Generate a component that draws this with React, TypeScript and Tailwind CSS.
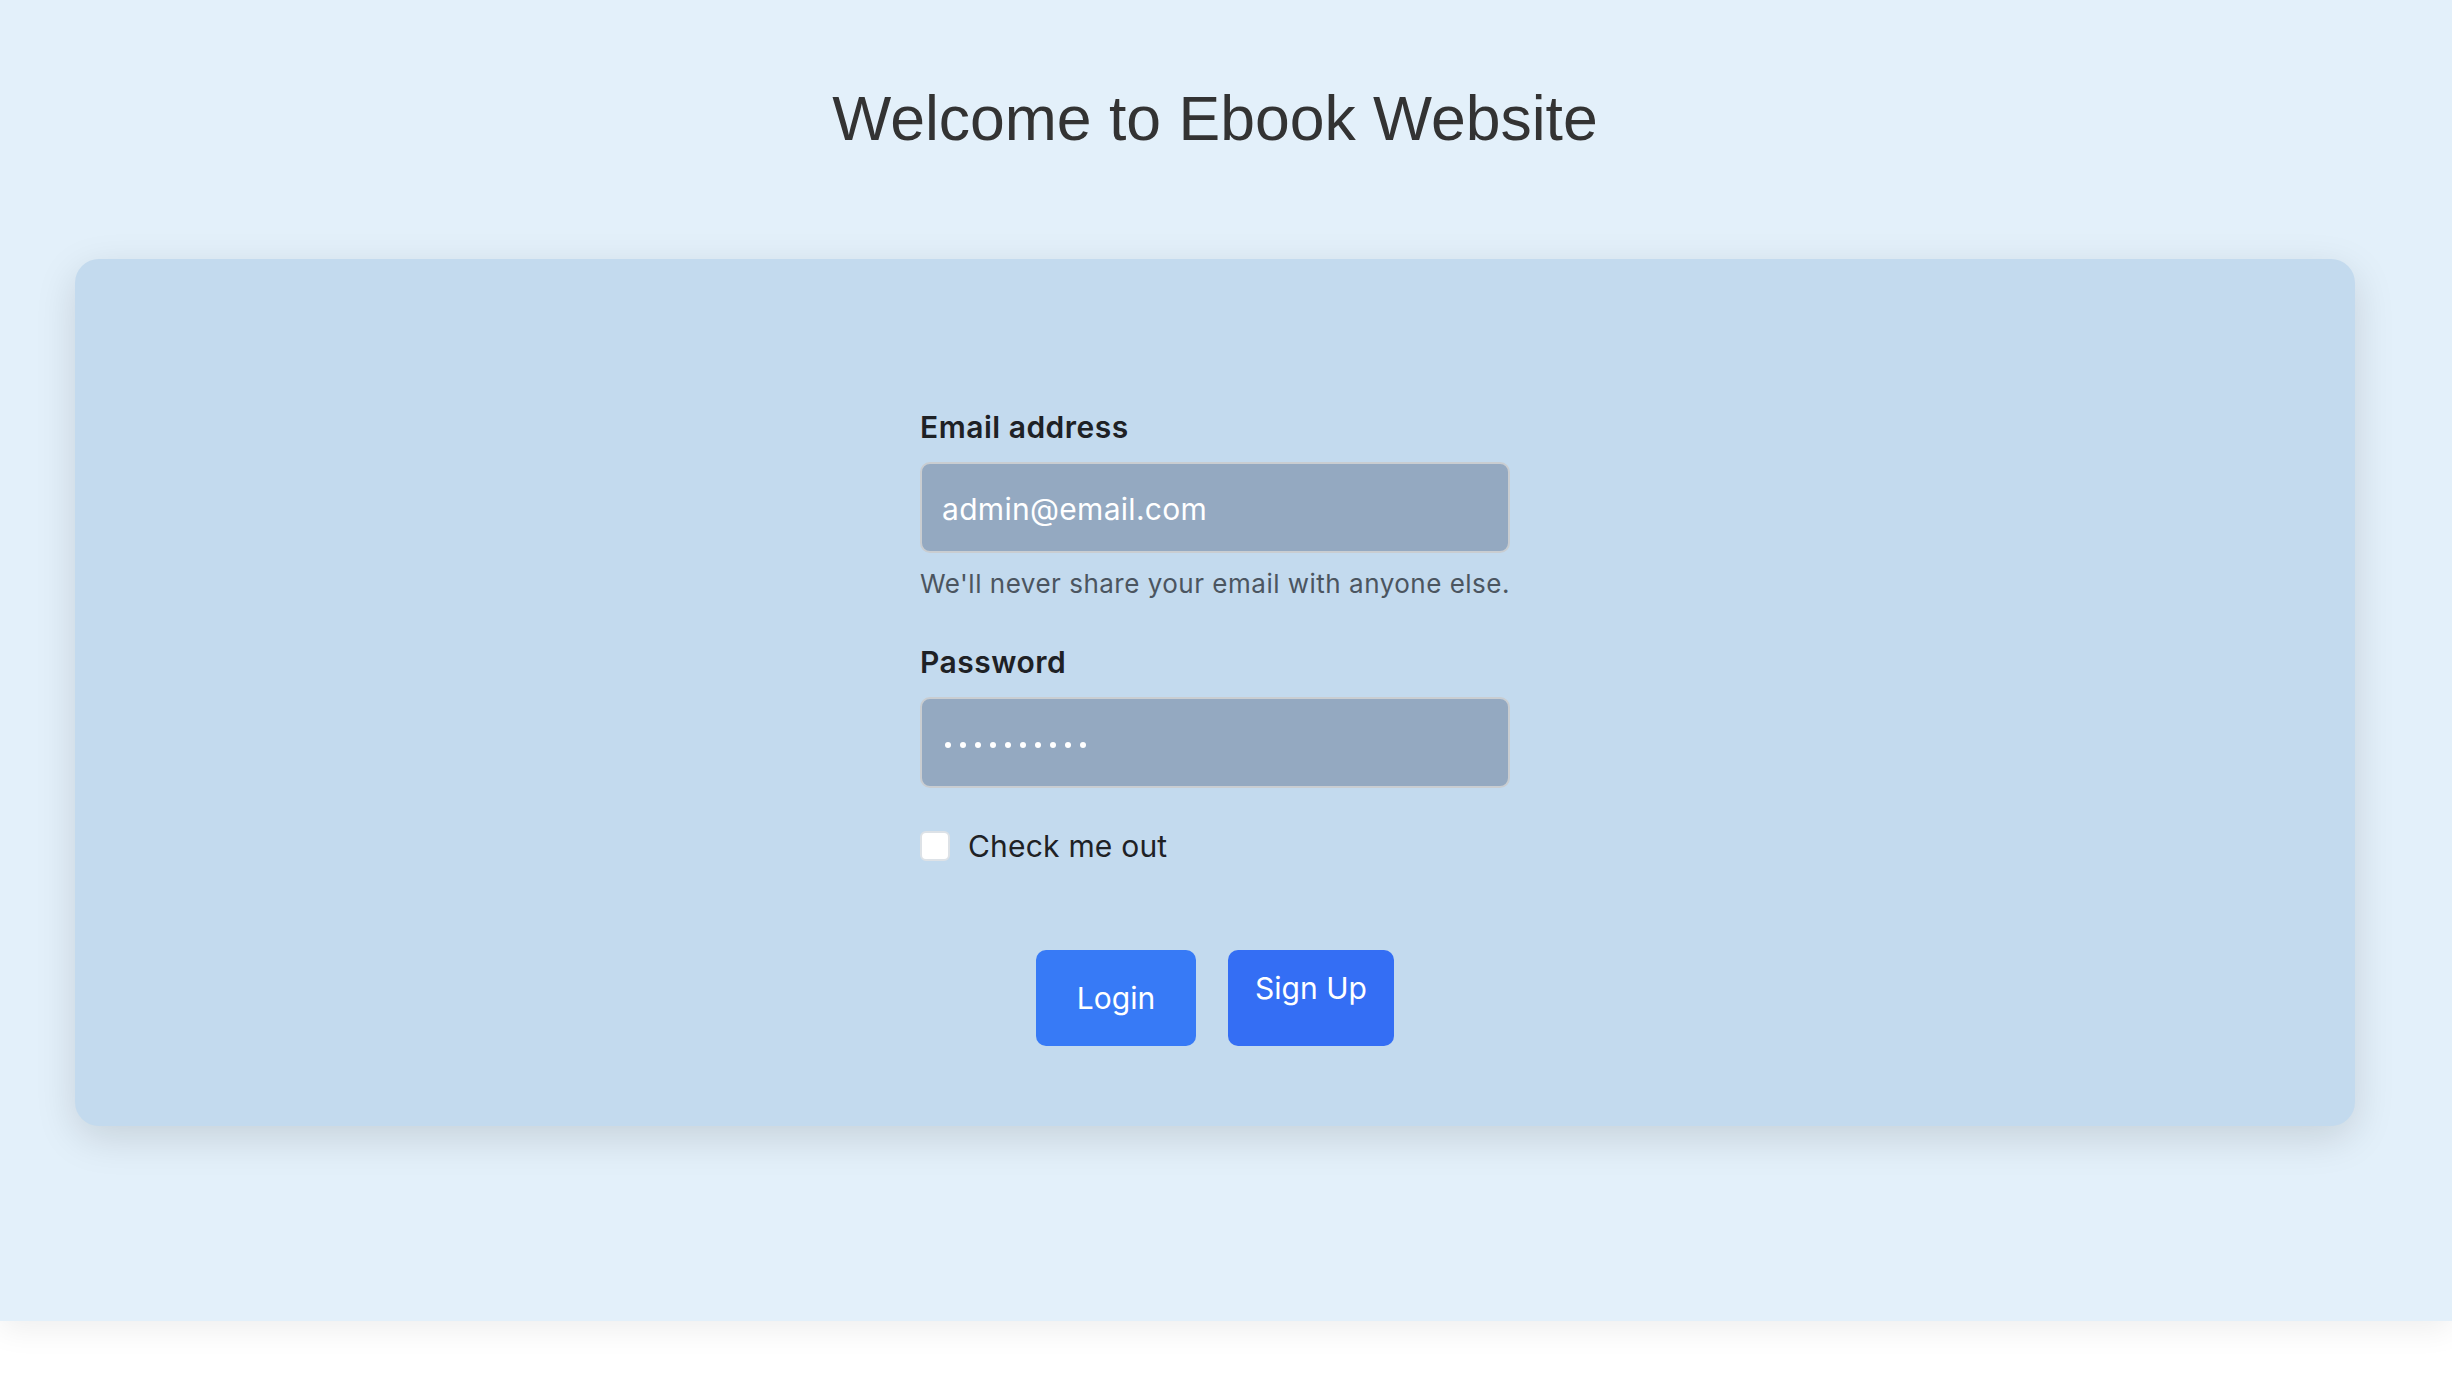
import React from "react";

export default function App() {
  return (
    <div className="min-h-[1386px] bg-white">
      <div className="bg-[#e3f0fa] h-[1321px] shadow-[0_8px_30px_rgba(0,0,0,0.07)] pl-[75px] pr-[97px] pt-[87px]">
        <h1 className="text-center text-[62.5px] leading-[62px] text-[#333333] font-['Liberation_Sans',Arial,sans-serif]">
          Welcome to Ebook Website
        </h1>
        <div className="mt-[110px] bg-[#c3daee] rounded-[24px] shadow-[0_12px_40px_rgba(0,0,0,0.13)] pt-[148px] pb-[80px] font-['Inter',sans-serif]">
          <div className="w-[590px] mx-auto">
            <label className="block text-[30px] leading-[40px] font-semibold tracking-[0.5px] text-[#1e2125]">Email address</label>
            <div className="mt-[15px] h-[91px] rounded-[10px] border-2 border-[#c9cdd1] bg-[#94a9c1] flex items-center pl-[20px] pt-[4px] text-[30px] tracking-[0.3px] text-white">
              admin@email.com
            </div>
            <div className="mt-[12px] text-[26px] leading-[37px] tracking-[0.5px] text-[#4b5560]">
              We'll never share your email with anyone else.
            </div>
            <label className="block mt-[40px] text-[30px] leading-[40px] font-semibold tracking-[0.5px] text-[#1e2125]">Password</label>
            <div className="mt-[15px] h-[91px] rounded-[10px] border-2 border-[#c9cdd1] bg-[#94a9c1] flex items-center pl-[23px] pt-[5px] gap-[9px]">
              {Array.from({ length: 10 }).map((_, i) => (
                <span key={i} className="block w-[6px] h-[6px] rounded-full bg-white" />
              ))}
            </div>
            <div className="mt-[38px] flex items-center gap-[18px]">
              <span className="block w-[30px] h-[30px] rounded-[6px] bg-white border-2 border-[#dde2e7]" />
              <span className="text-[30px] leading-[40px] tracking-[0.2px] text-[#1e2125]">Check me out</span>
            </div>
            <div className="mt-[84px] flex justify-center gap-[32px]">
              <button className="w-[160px] h-[96px] rounded-[10px] bg-[#377af6] text-white text-[30px] flex items-center justify-center">
                Login
              </button>
              <button className="w-[166px] h-[96px] rounded-[10px] bg-[#346ef4] text-white text-[30px] flex items-center justify-center pb-[20px]">
                Sign Up
              </button>
            </div>
          </div>
        </div>
      </div>
    </div>
  );
}
